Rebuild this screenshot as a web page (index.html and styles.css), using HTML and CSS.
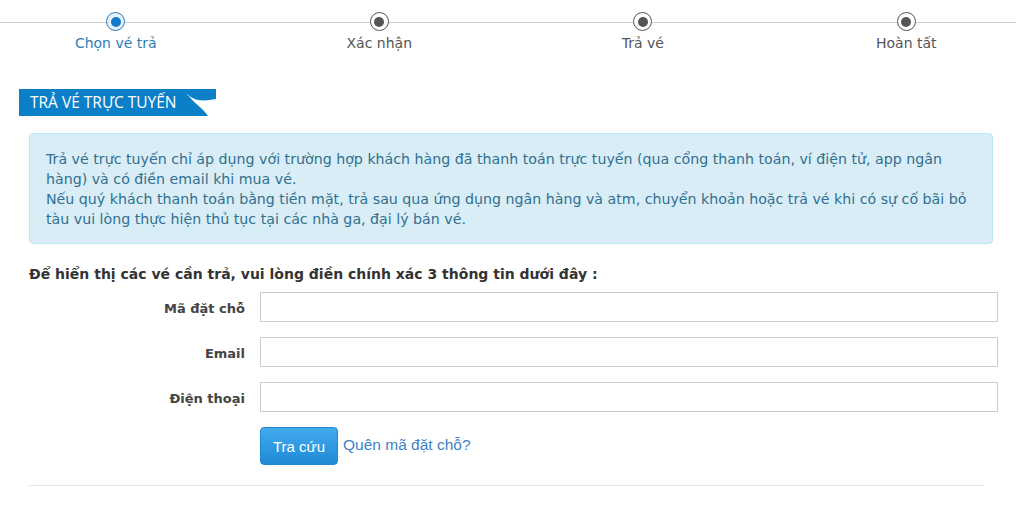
FILE: index.html
```html
<!DOCTYPE html>
<html lang="vi">
<head>
    <meta charset="UTF-8">
    <title>Trả vé trực tuyến</title>
    <link rel="stylesheet" href="styles.css">
</head>
<body>
    <div class="steps">
        <div class="step active">
            <span class="step-dot"></span>
            <span class="step-label">Chọn vé trả</span>
        </div>
        <div class="step">
            <span class="step-dot"></span>
            <span class="step-label">Xác nhận</span>
        </div>
        <div class="step">
            <span class="step-dot"></span>
            <span class="step-label">Trả vé</span>
        </div>
        <div class="step">
            <span class="step-dot"></span>
            <span class="step-label">Hoàn tất</span>
        </div>
    </div>

    <div class="page">
        <div class="title-bar">
            <span class="title-text">TRẢ VÉ TRỰC TUYẾN</span>
            <svg class="title-swoosh" width="32" height="27" viewBox="0 0 32 27">
                <path d="M0 1 C7 12 18 13 32 10 L32 27 L24 27 C18 18 8 13 0 1 Z" fill="#fff"/>
            </svg>
        </div>

        <div class="alert-info">
            Trả vé trực tuyến chỉ áp dụng với trường hợp khách hàng đã thanh toán trực tuyến (qua cổng thanh toán, ví điện tử, app ngân hàng) và có điền email khi mua vé.<br>
            Nếu quý khách thanh toán bằng tiền mặt, trả sau qua ứng dụng ngân hàng và atm, chuyển khoản hoặc trả vé khi có sự cố bãi bỏ tàu vui lòng thực hiện thủ tục tại các nhà ga, đại lý bán vé.
        </div>

        <div class="lookup-note">Để hiển thị các vé cần trả, vui lòng điền chính xác 3 thông tin dưới đây :</div>

        <form class="lookup-form">
            <label class="form-label" for="bookingCode">Mã đặt chỗ</label>
            <input class="form-input" type="text" id="bookingCode">

            <label class="form-label" for="email">Email</label>
            <input class="form-input" type="text" id="email">

            <label class="form-label" for="phone">Điện thoại</label>
            <input class="form-input" type="text" id="phone">

            <div class="form-actions">
                <button class="btn-search" type="button">Tra cứu</button>
                <a class="forgot-link" href="#">Quên mã đặt chỗ?</a>
            </div>
        </form>

        <hr class="divider">
    </div>
</body>
</html>
```

FILE: styles.css
```css
body {
    margin: 0;
    font-family: "DejaVu Sans", Verdana, sans-serif;
    font-size: 13px;
    color: #333;
    background: #fff;
    overflow-x: hidden;
}

/* stepper */
.steps {
    position: relative;
    display: grid;
    grid-template-columns: repeat(4, 1fr);
    width: 1054px;
    margin-left: -16px;
    padding-top: 12px;
}

.steps:before {
    content: "";
    position: absolute;
    top: 22px;
    left: 0;
    right: 0;
    height: 1px;
    background: #ccc;
}

.step {
    position: relative;
    display: flex;
    flex-direction: column;
    align-items: center;
}

.step-dot {
    width: 17px;
    height: 17px;
    border: 1.5px solid #555;
    border-radius: 50%;
    background: #fff;
    display: flex;
    align-items: center;
    justify-content: center;
}

.step-dot:after {
    content: "";
    width: 10px;
    height: 10px;
    border-radius: 50%;
    background: #555;
}

.step.active .step-dot {
    border-color: #2b7cb8;
    background: #e6f2fb;
}

.step.active .step-dot:after {
    background: #127bcb;
}

.step-label {
    margin-top: 3px;
    font-size: 14px;
    line-height: 18px;
    color: #555;
}

.step.active .step-label {
    color: #2d7eb5;
}

/* content */
.page {
    padding: 0 18px 0 19px;
}

.title-bar {
    position: relative;
    width: 197px;
    height: 27px;
    margin-top: 37px;
    background: #0b80c9;
}

.title-text {
    display: block;
    padding-left: 11px;
    font-family: "Open Sans", "DejaVu Sans", sans-serif;
    font-size: 15.5px;
    line-height: 27px;
    color: #fff;
}

.title-swoosh {
    position: absolute;
    top: 0;
    right: 0;
}

.alert-info {
    margin: 17px 5px 0 10px;
    padding: 15px 16px 14px;
    background: #d9edf7;
    border: 1px solid #bce8f1;
    border-radius: 4px;
    color: #31708f;
    font-size: 14.2px;
    line-height: 20px;
}

.lookup-note {
    margin: 20px 0 0 10px;
    font-size: 14px;
    font-weight: bold;
    line-height: 20px;
    color: #333;
}

.lookup-form {
    display: grid;
    grid-template-columns: 226px 1fr;
    column-gap: 15px;
    row-gap: 15px;
    align-items: center;
    margin-top: 8px;
}

.form-label {
    text-align: right;
    font-weight: bold;
    color: #444;
    padding-top: 3px;
}

.form-input {
    height: 30px;
    box-sizing: border-box;
    border: 1px solid #ccc;
    padding: 4px 8px;
    font-family: inherit;
    font-size: 13px;
}

.form-actions {
    grid-column: 2;
    display: flex;
    align-items: center;
}

.btn-search {
    width: 78px;
    height: 38px;
    border: 1px solid #1f88d2;
    border-radius: 4px;
    background: linear-gradient(#43aaed, #1e8ad6);
    color: #fff;
    font-family: "Liberation Sans", Arial, sans-serif;
    font-size: 15px;
    cursor: pointer;
}

.forgot-link {
    margin-left: 5px;
    font-family: "Liberation Sans", Arial, sans-serif;
    font-size: 15.5px;
    color: #3d82c4;
    text-decoration: none;
    padding-bottom: 2px;
}

.divider {
    margin: 20px 14px 0 10px;
    border: 0;
    border-top: 1px solid #e5e5e5;
}
```
